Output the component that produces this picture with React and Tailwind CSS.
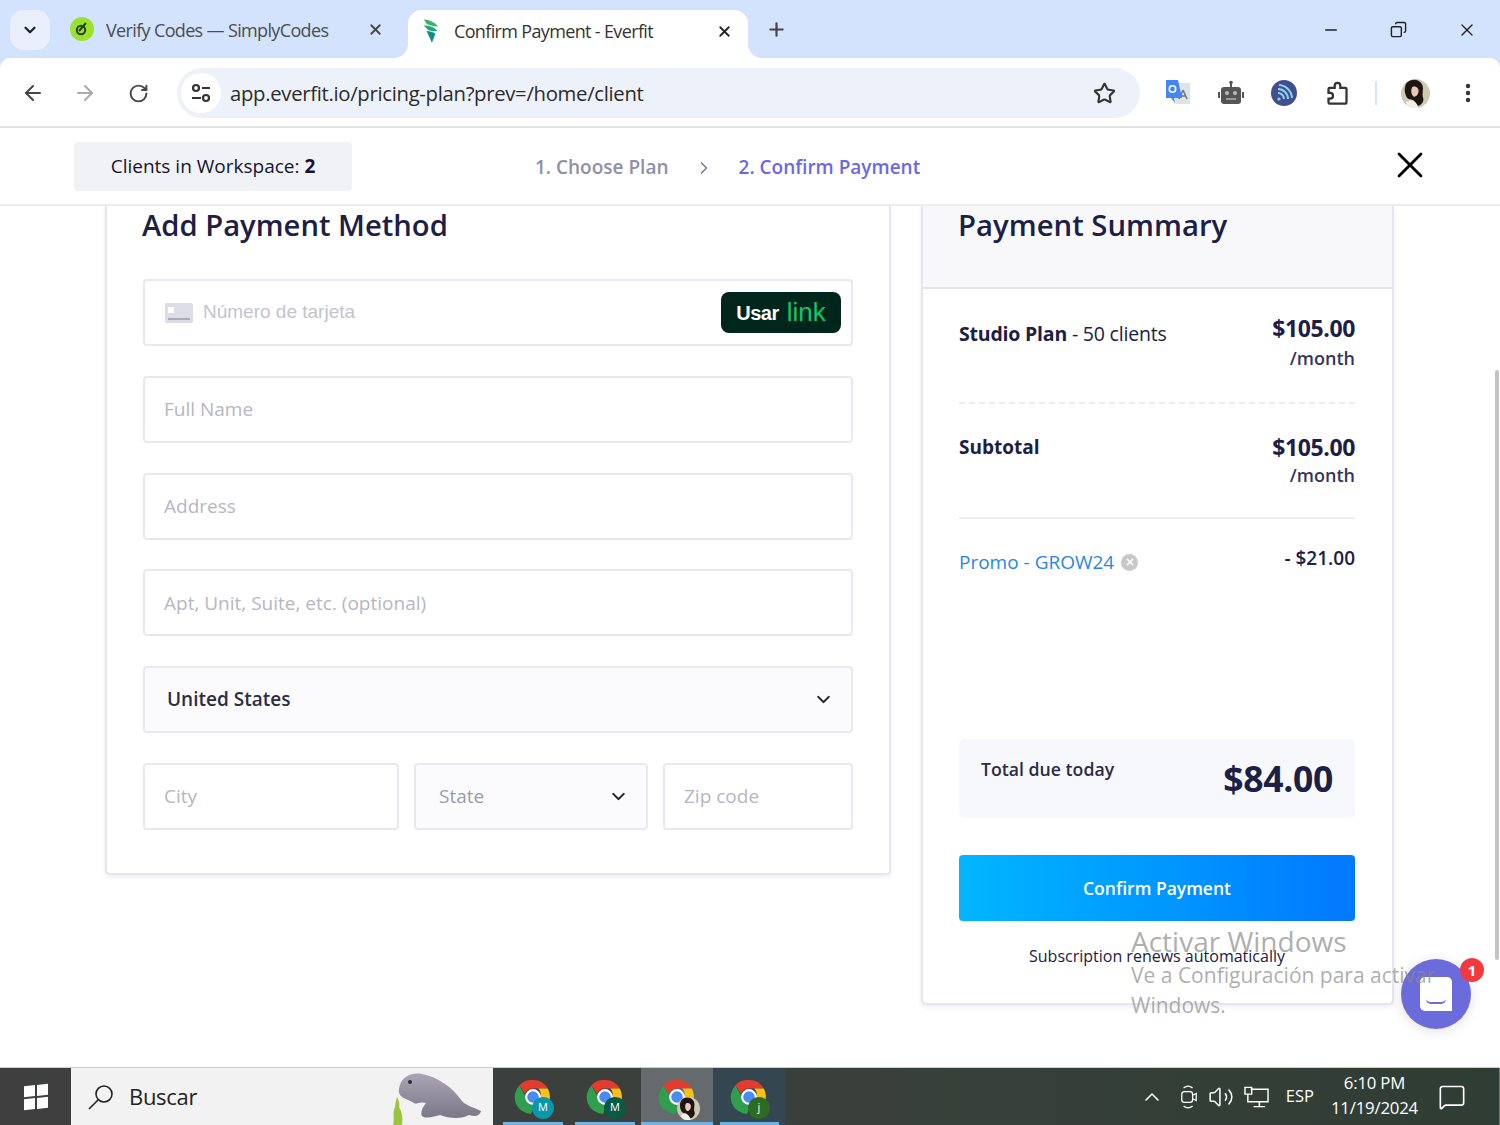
import { ChevronDown, ChevronRight, ArrowLeft, ArrowRight, RotateCw, Star, Plus, X, Minus, Copy, EllipsisVertical, ChevronUp, Volume2, MessageSquare } from 'lucide-react'

const field = 'flex h-[67px] items-center rounded-[4px] border-2 border-[#e8e8f2] bg-white px-[19px] text-[19px] text-[#b6b6c4]'

function Avatar({ size }) {
  return (
    <svg viewBox="0 0 30 30" style={{ width: size, height: size }}>
      <circle cx="15" cy="15" r="15" fill="#cfcab4" />
      <path d="M6 4C11-1 19 0 22 6c2 5-1 9 1 14 1 4-3 8-6 8-2-5-5-7-8-7C4 20 2 9 6 4z" fill="#1d1613" />
      <path d="M12 8c4-1 7 2 6 6-1 3-3 5-5 4-3-2-3-8-1-10z" fill="#e8c9b4" />
      <path d="M9 22c4 0 8 3 9 8h-7c-3-1-5-3-6-6z" fill="#f2efe6" />
    </svg>
  )
}

function ChromeIcon({ badge, letter, avatar }) {
  return (
    <div className="relative h-[38px] w-[38px]">
      <svg viewBox="0 0 36 36" className="h-[38px] w-[38px]">
        <path d="M18 2a16 16 0 0 1 14 8H18a8 8 0 0 0-7.5 5L5 7a16 16 0 0 1 13-5z" fill="#e33b2e" />
        <path d="M32 10a16 16 0 0 1-9 23l-7-7a8 8 0 0 0 9-8 8 8 0 0 0-2-8z" fill="#f9c018" />
        <path d="M5 7l7 12a8 8 0 0 0 8 7l-4 8A16 16 0 0 1 5 7z" fill="#2f9e4f" />
        <circle cx="18" cy="18" r="6.5" fill="#4a8bf0" stroke="#fff" strokeWidth="2" />
      </svg>
      {avatar ? (
        <div className="absolute bottom-[-4px] right-[-4px]"><Avatar size={23} /></div>
      ) : (
        <div className={`absolute bottom-[-3px] right-[-2px] flex h-[22px] w-[22px] items-center justify-center rounded-full text-[11px] text-white ${badge}`}>{letter}</div>
      )}
    </div>
  )
}

function TabBar() {
  return (
    <div className="flex h-[58px] items-end bg-[#d3e3fd] font-['Open_Sans',sans-serif] text-[#3c4043]">
      <div className="mb-[8px] ml-[10px] flex h-[40px] w-[40px] items-center justify-center rounded-[14px] bg-[#e9f0fc]">
        <ChevronDown size={18} strokeWidth={3} className="text-[#222]" />
      </div>
      <div className="flex h-[58px] w-[358px] items-center pl-[20px]">
        <svg viewBox="0 0 24 24" className="h-[24px] w-[24px]">
          <circle cx="12" cy="12" r="12" fill="#9be22d" />
          <circle cx="11" cy="13" r="4.2" fill="none" stroke="#23401a" strokeWidth="2" />
          <path d="M9 14l7-8" stroke="#23401a" strokeWidth="2" />
        </svg>
        <span className="ml-[12px] mt-[2px] w-[261px] text-[18px] tracking-[-0.65px] text-[#4a4d52]">Verify Codes — SimplyCodes</span>
        <X size={17} strokeWidth={2.5} className="text-[#444]" />
      </div>
      <div className="relative flex h-[48px] w-[340px] items-center rounded-t-[14px] bg-white pb-[6px] pl-[14px]">
        <div className="absolute bottom-0 left-[-14px] h-[14px] w-[14px] bg-white">
          <div className="h-[14px] w-[14px] rounded-br-[14px] bg-[#d3e3fd]" />
        </div>
        <div className="absolute bottom-0 right-[-14px] h-[14px] w-[14px] bg-white">
          <div className="h-[14px] w-[14px] rounded-bl-[14px] bg-[#d3e3fd]" />
        </div>
        <svg viewBox="0 0 20 26" className="h-[24px] w-[18px]">
          <path d="M2 0c6 1 12 3 16 8-5 0-9-1-13-3z" fill="#37b36f" />
          <path d="M2 7c6 0 12 2 15 6-4 1-8 0-11-2z" fill="#1da67c" />
          <path d="M5 13c4 0 7 1 10 3l-4 10C9 22 7 17 5 13z" fill="#0f8f86" />
        </svg>
        <span className="ml-[14px] w-[262px] text-[18px] tracking-[-0.65px] text-[#333]">Confirm Payment - Everfit</span>
        <X size={17} strokeWidth={2.5} className="text-[#222]" />
      </div>
      <div className="flex h-[58px] flex-1 items-center pl-[18px] pt-[1px]">
        <Plus size={21} strokeWidth={2.5} className="text-[#444]" />
        <div className="ml-auto flex items-center gap-[50px] pr-[23px]">
          <Minus size={18} strokeWidth={2} className="text-[#222]" />
          <Copy size={17} strokeWidth={2} className="-scale-x-100 text-[#222]" />
          <X size={20} strokeWidth={1.6} className="text-[#222]" />
        </div>
      </div>
    </div>
  )
}

function Toolbar() {
  return (
    <div className="flex h-[70px] items-center rounded-t-[10px] border-b-2 border-[#e2e2e2] bg-white pt-[2px] font-['Open_Sans',sans-serif] text-[#444746]">
      <div className="flex w-[177px] items-center pl-[21px]">
        <ArrowLeft size={24} strokeWidth={2} />
        <ArrowRight size={24} strokeWidth={2} className="ml-[28px] text-[#aaa]" />
        <RotateCw size={21} strokeWidth={2.2} className="ml-[31px]" />
      </div>
      <div className="flex h-[50px] w-[963px] items-center rounded-full bg-[#edf2fa] pl-[4px] pr-[24px]">
        <div className="flex h-[40px] w-[40px] items-center justify-center rounded-full bg-white">
          <svg viewBox="0 0 24 24" className="h-[24px] w-[24px]" fill="none" stroke="#333" strokeWidth="2.2">
            <circle cx="7" cy="7" r="3" />
            <path d="M13 7h8M3 17h9" />
            <circle cx="17" cy="17" r="3" />
          </svg>
        </div>
        <span className="ml-[9px] flex-1 text-[20.3px] tracking-[-0.3px] text-[#2b2b2b]">app.everfit.io/pricing-plan?prev=/home/client</span>
        <Star size={23} strokeWidth={2.2} className="text-[#333]" />
      </div>
      {/* translate extension */}
      <svg viewBox="0 0 26 28" className="ml-[25px] h-[28px] w-[26px]">
        <path d="M10 4h15v21H10z" fill="#dfe3e8" />
        <path d="M18 11l-4 9M18 11l4 9M15 17h6" stroke="#6d7a86" strokeWidth="1.6" fill="none" />
        <path d="M1 1h12l4 18H9l1 5-4-5H1z" fill="#4285f4" />
        <circle cx="7.5" cy="10" r="3.2" fill="none" stroke="#fff" strokeWidth="1.6" />
      </svg>
      {/* robot extension */}
      <svg viewBox="0 0 26 26" className="ml-[27px] h-[26px] w-[26px]">
        <path d="M13 1v6" stroke="#555" strokeWidth="2" />
        <circle cx="13" cy="2.5" r="1.8" fill="#555" />
        <path d="M6 7h14a3 3 0 0 1 3 3v11a3 3 0 0 1-3 3H6a3 3 0 0 1-3-3V10a3 3 0 0 1 3-3z" fill="#555" />
        <rect x="0" y="12" width="2" height="6" fill="#555" />
        <rect x="24" y="12" width="2" height="6" fill="#555" />
        <circle cx="9" cy="13" r="2" fill="#bbb" />
        <circle cx="17" cy="13" r="2" fill="#bbb" />
        <rect x="8" y="18" width="10" height="2" fill="#999" />
      </svg>
      {/* signal extension */}
      <svg viewBox="0 0 26 26" className="ml-[27px] h-[26px] w-[26px]" fill="none" stroke="#8fd3e8" strokeWidth="2">
        <circle cx="13" cy="13" r="13" fill="#3f4f8f" stroke="none" />
        <circle cx="8" cy="19" r="1.6" fill="#8fd3e8" stroke="none" />
        <path d="M7 13a6 6 0 0 1 6 6M7 9a10 10 0 0 1 10 10M8 5a14 14 0 0 1 13 13" />
      </svg>
      <svg viewBox="0 0 24 24" className="ml-[27px] h-[27px] w-[27px]" fill="none" stroke="#333" strokeWidth="2">
        <path d="M4 8a1 1 0 0 1 1-1h4.5V5a2.5 2.5 0 0 1 5 0v2H19a1 1 0 0 1 1 1v12a1 1 0 0 1-1 1H5a1 1 0 0 1-1-1v-3.5h1.5a2.5 2.5 0 0 0 0-5H4z" />
      </svg>
      <div className="ml-[24px] h-[24px] w-[2px] bg-[#d3e3fd]" />
      <div className="ml-[24px] flex"><Avatar size={29} /></div>
      <EllipsisVertical size={24} strokeWidth={2.4} className="ml-[26px] text-[#333]" />
    </div>
  )
}

function PageHeader() {
  return (
    <div className="flex h-[78px] items-center border-b-2 border-[#ececf1] bg-white font-['Open_Sans',sans-serif]">
      <div className="ml-[74px] flex h-[49px] w-[278px] items-center justify-center rounded-[4px] bg-[#f1f2f6] pt-[1px] text-[19px] text-[#141432]">
        Clients in Workspace:&nbsp;<b>2</b>
      </div>
      <span className="ml-[183px] mt-[3px] text-[19px] font-semibold text-[#8d90a8]">1. Choose Plan</span>
      <ChevronRight size={20} strokeWidth={1.6} className="ml-[25px] mt-[3px] text-[#6d6f80]" />
      <span className="ml-[25px] mt-[3px] text-[19px] font-semibold text-[#6a68e8]">2. Confirm Payment</span>
      <X size={44} strokeWidth={1.5} className="-mt-[2px] ml-[468px] text-black" />
    </div>
  )
}

function PaymentForm() {
  return (
    <div className="ml-[105px] h-[669px] w-[786px] rounded-b-[5px] border-x-2 border-b-2 border-[#e6e6f2] bg-white px-[36px] shadow-[0_2px_4px_rgba(40,40,90,0.08)]">
      <h2 className="-ml-[1px] text-[29.2px] leading-[38px] font-semibold text-[#1c2045]">Add Payment Method</h2>
      <div className="mt-[35px] flex flex-col gap-[29.8px]">
        <div className="flex h-[67px] items-center rounded-[4px] border-2 border-[#e8e8f2] bg-white pl-[20px] pr-[10px]">
          <div className="relative h-[20px] w-[28px] rounded-[2px] bg-[#dcdde6]">
            <div className="absolute left-[3px] top-[4px] h-[6px] w-[6px] bg-white" />
            <div className="absolute bottom-[3px] left-[3px] h-[2px] w-[22px] bg-[#a9abb8]" />
          </div>
          <span className="ml-[10px] font-['Liberation_Sans',sans-serif] text-[19px] text-[#c3c4ce]">Número de tarjeta</span>
          <div className="ml-auto flex h-[41px] w-[120px] items-center justify-center rounded-[8px] bg-[#00261c] font-['Liberation_Sans',sans-serif]">
            <span className="mt-[1px] text-[20px] font-bold tracking-[-0.5px] text-white">Usar</span>
            <span className="mb-[2px] ml-[8px] text-[26px] font-medium leading-none text-[#10c66f]">link</span>
          </div>
        </div>
        <div className={field}>Full Name</div>
        <div className={field}>Address</div>
        <div className={field}>Apt, Unit, Suite, etc. (optional)</div>
        <div className="flex h-[67px] items-center rounded-[4px] border-2 border-[#e8e8f2] bg-[#fbfbfd] pl-[22px] pr-[17px] text-[19px] font-semibold text-[#2b2d45]">
          United States
          <ChevronDown size={21} strokeWidth={2.4} className="ml-auto text-[#222]" />
        </div>
        <div className="flex gap-[15px]">
          <div className={`${field} w-[256px]`}>City</div>
          <div className="flex h-[67px] w-[234px] items-center rounded-[4px] border-2 border-[#e8e8f2] bg-[#fbfbfd] pl-[23px] pr-[17px] text-[19px] text-[#9a9bab]">
            State
            <ChevronDown size={21} strokeWidth={2.4} className="ml-auto text-[#222]" />
          </div>
          <div className={`${field} w-[190px]`}>Zip code</div>
        </div>
      </div>
    </div>
  )
}

function PaymentSummary() {
  return (
    <div className="ml-[30px] h-[799px] w-[473px] rounded-b-[5px] border-x-2 border-b-2 border-[#e6e6f2] bg-white shadow-[0_2px_4px_rgba(40,40,90,0.08)]">
      <div className="h-[83px] border-b-2 border-[#e4e4ee] bg-[#f8f8fb] px-[35px]">
        <h2 className="text-[29.3px] leading-[38px] font-semibold text-[#1c2045]">Payment Summary</h2>
      </div>
      <div className="pl-[36px] pr-[37px] text-[#1c2045]">
        <div className="flex h-[115px] justify-between border-b-2 border-dashed border-[#ececf4] pt-[25px]">
          <p className="mt-[5px] text-[19.5px] tracking-[-0.2px]"><b>Studio Plan</b> - 50 clients</p>
          <div className="text-right">
            <p className="text-[23px] leading-[28px] font-bold tracking-[-0.4px]">$105.00</p>
            <p className="mt-[3px] text-[18px] font-semibold leading-[26px] text-[#34375a]">/month</p>
          </div>
        </div>
        <div className="flex h-[115px] justify-between border-b-2 border-[#ececf4] pt-[29px]">
          <p className="text-[19px] font-bold leading-[28px]">Subtotal</p>
          <div className="text-right">
            <p className="text-[23px] leading-[28px] font-bold tracking-[-0.4px]">$105.00</p>
            <p className="mt-[1px] text-[18px] font-semibold leading-[26px] text-[#34375a]">/month</p>
          </div>
        </div>
        <div className="flex justify-between pt-[25px]">
          <div className="mt-[4px] flex items-center text-[19px] leading-[28px] text-[#2a85e8]">
            Promo - GROW24
            <div className="ml-[7px] flex h-[17px] w-[17px] items-center justify-center rounded-full bg-[#c8c8c8]">
              <X size={10} strokeWidth={4} className="text-white" />
            </div>
          </div>
          <p className="text-[19px] font-semibold leading-[28px]">- $21.00</p>
        </div>
        <div className="mt-[163px] flex h-[79px] justify-between rounded-[5px] bg-[#f7f8fb] px-[22px]">
          <p className="mt-[17px] text-[17.7px] font-semibold leading-[26px] text-[#2b2d45]">Total due today</p>
          <p className="mt-[16px] text-[35.5px] font-bold leading-[46px] tracking-[-0.3px]">$84.00</p>
        </div>
        <div className="mt-[37px] flex h-[66px] items-center justify-center rounded-[4px] bg-gradient-to-r from-[#04b6ff] to-[#0578ff] text-[17.5px] font-semibold text-white">
          Confirm Payment
        </div>
        <p className="mt-[23px] text-center text-[16px] text-[#1c2045]">Subscription renews automatically</p>
      </div>
    </div>
  )
}

function Taskbar() {
  const apps = [
    { badge: 'bg-[#0d96a8]', letter: 'M', bg: '', line: 'left-[6px] right-[6px]' },
    { badge: 'bg-[#0b5a46]', letter: 'M', bg: '', line: 'left-[6px] right-[6px]' },
    { avatar: true, bg: 'bg-[#656a6d]', line: 'left-0 right-0' },
    { badge: 'bg-[#2f6a22]', letter: 'j', bg: 'bg-[#34464f]', line: 'left-[7px] right-[6px]' },
  ]
  return (
    <div className="flex h-[58px] items-stretch border-t border-[#cfcfcf] bg-gradient-to-r from-[#3f3f3f] via-[#3a403c] to-[#2f3d34] font-['Open_Sans',sans-serif] text-white">
      <div className="flex w-[71px] items-center justify-center">
        <div className="grid grid-cols-2 gap-[2px] skew-y-[-6deg]">
          <div className="h-[11px] w-[11px] bg-white" />
          <div className="h-[11px] w-[11px] bg-white" />
          <div className="h-[11px] w-[11px] bg-white" />
          <div className="h-[11px] w-[11px] bg-white" />
        </div>
      </div>
      <div className="relative flex w-[422px] items-center overflow-hidden bg-[#f2f2f2] pl-[17px] text-[#222]">
        <svg viewBox="0 0 26 26" className="h-[26px] w-[26px]" fill="none" stroke="#222" strokeWidth="1.6">
          <circle cx="16" cy="10" r="8" />
          <path d="M10 16L1 25" />
        </svg>
        <span className="ml-[15px] text-[22px] tracking-[-0.3px]">Buscar</span>
        <svg viewBox="0 0 92 56" className="absolute bottom-0 right-[11px] h-[56px] w-[92px]">
          <defs>
            <linearGradient id="manatee" x1="0" y1="0" x2="0" y2="1">
              <stop offset="0" stopColor="#a9a5b4" />
              <stop offset="1" stopColor="#7d7888" />
            </linearGradient>
          </defs>
          <path d="M3 56c2-6-1-12 2-18 0-3 1-6 2-10 2 4 3 7 2 10 3 5 4 10 3 18z" fill="#9ac63e" />
          <path d="M10 16C12 8 22 3 32 5c16 3 30 13 40 27 4 5 12 6 19 10-1 5-6 6-12 4-7 4-19 4-29 0-8 2-14 4-18 1-2-4 1-9 4-13-6-2-10 2-12 0-6-4-11-4-14-8-2-4-1-7 0-10z" fill="url(#manatee)" />
          <circle cx="20" cy="13" r="2" fill="#2c2a33" />
        </svg>
      </div>
      <div className="flex pl-[4px]">
        {apps.map((a, i) => (
          <div key={i} className={`relative flex w-[72px] items-center justify-center ${a.bg}`}>
            <ChromeIcon badge={a.badge} letter={a.letter} avatar={a.avatar} />
            <div className={`absolute bottom-0 h-[3px] bg-[#6db3e8] ${a.line}`} />
          </div>
        ))}
      </div>
      <div className="ml-auto flex items-center border-r border-[#777] pr-[33px]">
        <ChevronUp size={24} strokeWidth={1.6} />
        <svg viewBox="0 0 20 26" className="ml-[16px] h-[24px] w-[18px]" fill="none" stroke="#fff" strokeWidth="1.4">
          <path d="M4 3a8 8 0 0 1 10 0M4 23a8 8 0 0 0 10 0" />
          <rect x="2" y="7" width="12" height="12" rx="3" />
          <path d="M14 11l4-2v8l-4-2" />
        </svg>
        <Volume2 size={26} strokeWidth={1.4} className="ml-[10px]" />
        <svg viewBox="0 0 26 24" className="ml-[10px] h-[24px] w-[25px]" fill="none" stroke="#fff" strokeWidth="1.5">
          <path d="M7 4h18v13H7M1 2h7v7H1zM4 9v8h3M16 17v5M10 22h12" />
        </svg>
        <span className="ml-[17px] text-[16.5px]">ESP</span>
        <div className="ml-[17px] -mt-[3px] text-center text-[16.8px] leading-[25px] tracking-[-0.2px]">
          <p>6:10 PM</p>
          <p>11/19/2024</p>
        </div>
        <MessageSquare size={28} strokeWidth={1.4} className="ml-[20px]" />
      </div>
    </div>
  )
}

export default function App() {
  return (
    <div className="relative flex h-[1125px] w-[1500px] flex-col overflow-hidden bg-[#d3e3fd] font-['Open_Sans',sans-serif]">
      <TabBar />
      <Toolbar />
      <PageHeader />
      <div className="flex flex-1 items-start overflow-hidden bg-white">
        <PaymentForm />
        <PaymentSummary />
      </div>
      <Taskbar />

      {/* scrollbar */}
      <div className="absolute right-[1px] top-[370px] h-[590px] w-[4px] rounded-full bg-[#c4c4c4]" />

      {/* chat bubble */}
      <div className="absolute left-[1401px] top-[959px] flex h-[70px] w-[70px] items-center justify-center rounded-full bg-[#6b6bdc] shadow-[0_2px_14px_rgba(0,0,0,0.12)]">
        <div className="relative flex h-[34px] w-[32px] items-end justify-center rounded-[5px] rounded-br-none bg-white pb-[7px]">
          <div className="h-[5px] w-[20px] rounded-b-full border-b-2 border-[#6b6bdc]" />
        </div>
        <div className="absolute right-[-13px] top-[-1px] flex h-[24px] w-[24px] items-center justify-center rounded-full bg-[#f03a3f] text-[15px] font-bold text-white">1</div>
      </div>

      {/* activation watermark */}
      <div className="pointer-events-none absolute left-[1131px] top-[922px] w-[320px] text-[#8a8a8a]/70">
        <p className="text-[28px] leading-[38px]">Activar Windows</p>
        <p className="text-[21px] leading-[30px]">Ve a Configuración para activar Windows.</p>
      </div>
    </div>
  )
}
